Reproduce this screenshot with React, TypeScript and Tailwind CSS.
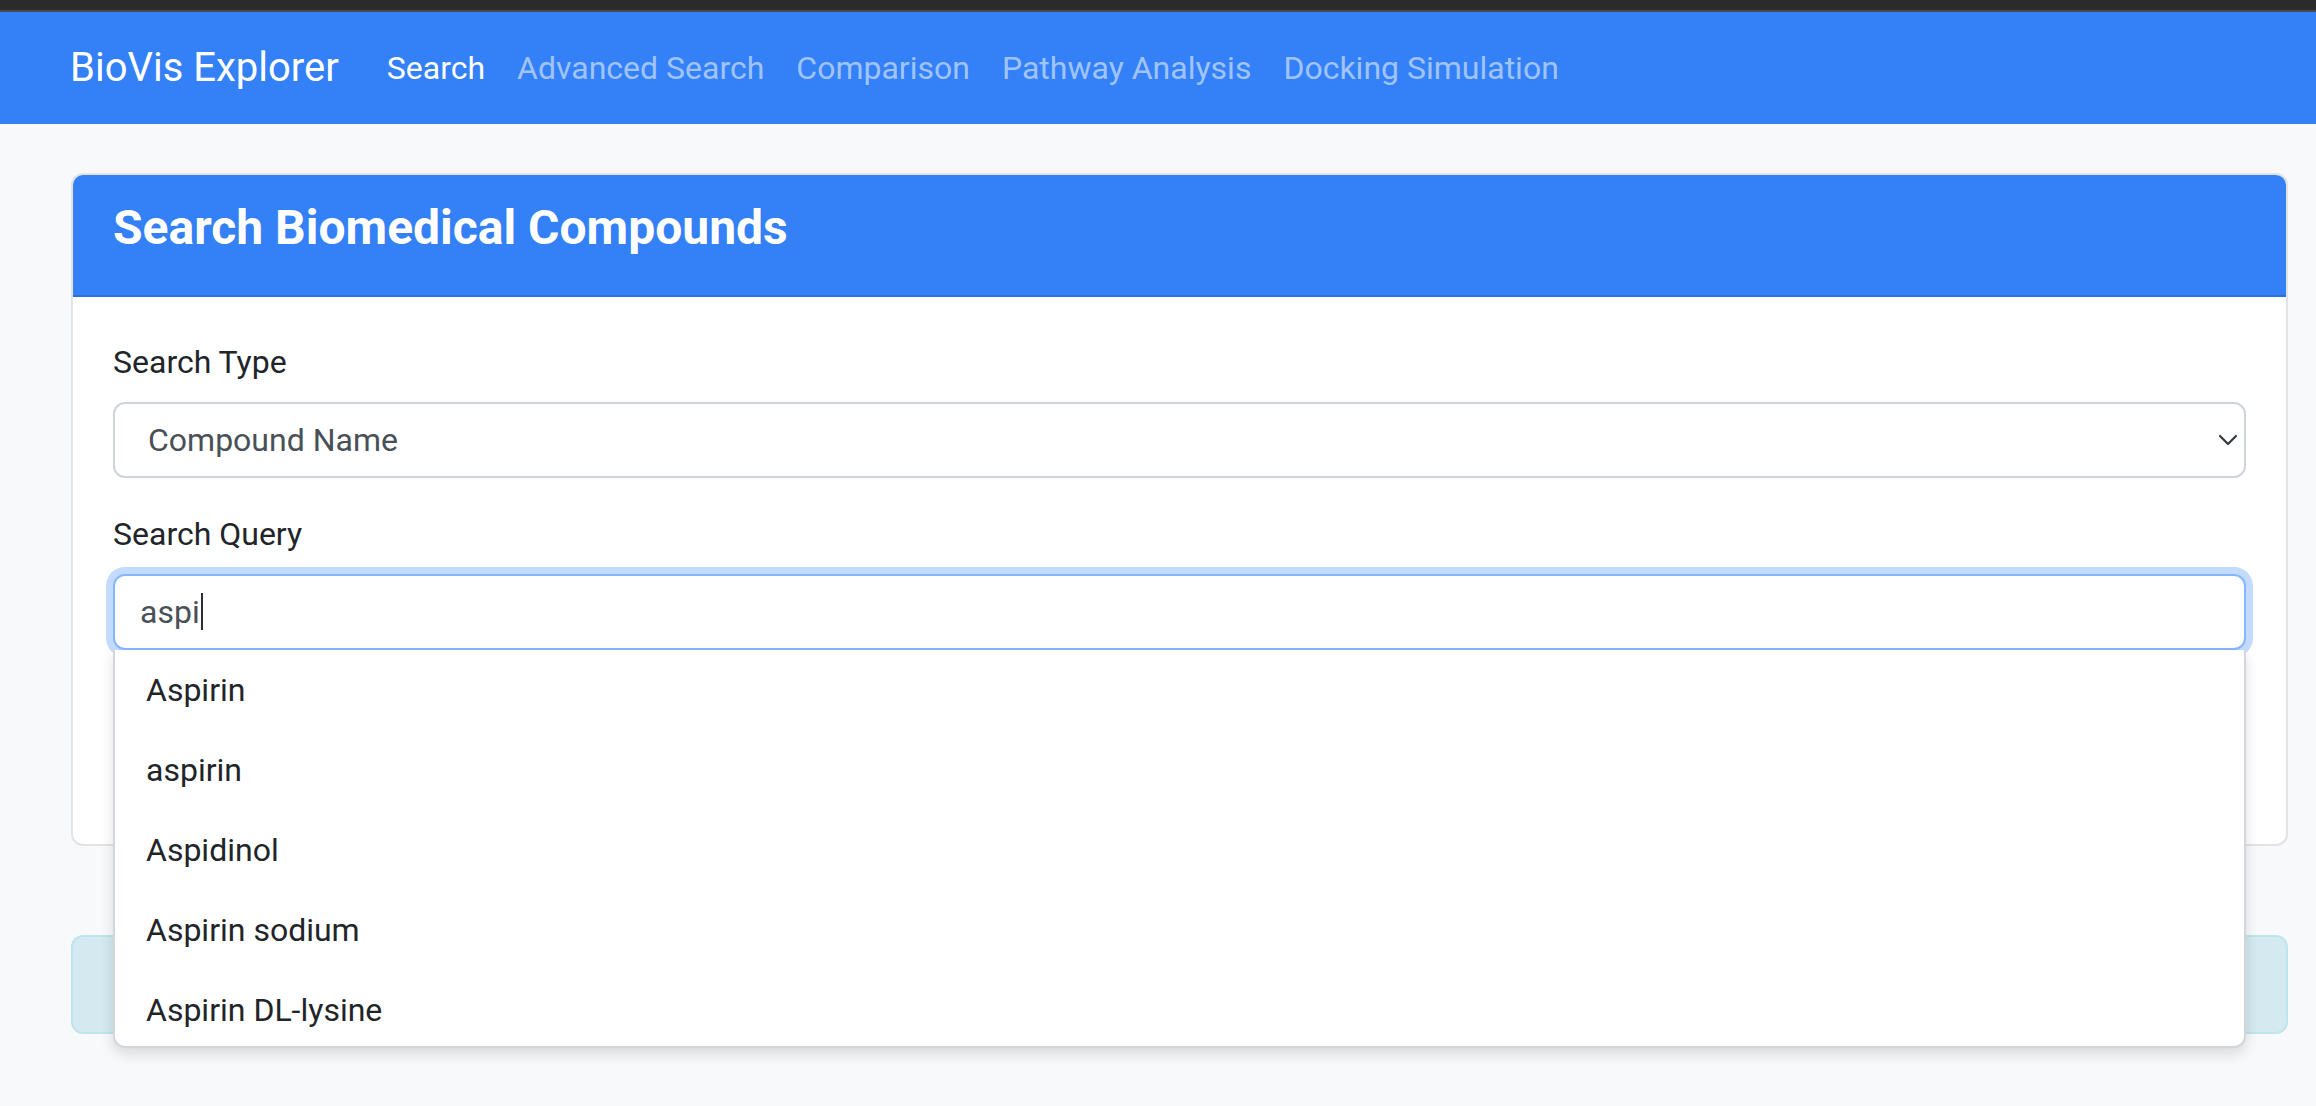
import React from 'react';

const navLinks = ['Search', 'Advanced Search', 'Comparison', 'Pathway Analysis', 'Docking Simulation'];

const suggestions = ['Aspirin', 'aspirin', 'Aspidinol', 'Aspirin sodium', 'Aspirin DL-lysine'];

const App: React.FC = () => {
  return (
    <div className="min-h-screen bg-[#f8f9fa] font-['Roboto',sans-serif] text-[#212529]">
      {/* Window chrome strip */}
      <div className="h-[10px] bg-[#2b2b2b]" />
      <div className="h-[2px] bg-[#4b4b4b]" />

      {/* Navbar */}
      <nav className="flex h-[112px] items-center bg-[#3380f7] pl-[70px]">
        <span className="mr-[32px] text-[40px] leading-[1.5] text-white">BioVis Explorer</span>
        <ul className="flex items-center">
          {navLinks.map((link, i) => (
            <li key={link}>
              <a
                href="#"
                className={`block px-[16px] text-[32px] leading-[1.5] ${
                  i === 0 ? 'text-white' : 'text-[rgba(255,255,255,0.55)]'
                }`}
              >
                {link}
              </a>
            </li>
          ))}
        </ul>
      </nav>

      <main className="ml-[71px] mr-[28px] pt-[49px]">
        {/* Search card */}
        <section className="rounded-[12px] border-2 border-[#e2e3e5] bg-white">
          <div className="rounded-t-[10px] border-b-2 border-[#2d70d8] bg-[#3380f7] px-[40px] pt-[24px] pb-[38px]">
            <h3 className="text-[48px] font-bold leading-[1.2] text-white">Search Biomedical Compounds</h3>
          </div>

          <div className="px-[40px] pt-[41px] pb-[194px]">
            <div className="mb-[32px]">
              <label className="mb-[16px] block text-[32px] leading-[1.5]">Search Type</label>
              <div className="relative">
                <select
                  defaultValue="name"
                  className="h-[76px] w-full appearance-none rounded-[12px] border-2 border-[#ced4da] bg-white pl-[33px] pr-[64px] text-[32px] text-[#495057] outline-none"
                >
                  <option value="name">Compound Name</option>
                  <option value="formula">Molecular Formula</option>
                  <option value="cid">PubChem CID</option>
                </select>
                <svg
                  className="pointer-events-none absolute right-[8px] top-1/2 -translate-y-1/2"
                  width="20"
                  height="14"
                  viewBox="0 0 20 14"
                  fill="none"
                >
                  <path d="M2 3l8 8 8-8" stroke="#343a40" strokeWidth="2.2" strokeLinecap="round" strokeLinejoin="round" />
                </svg>
              </div>
            </div>

            <div>
              <label className="mb-[16px] block text-[32px] leading-[1.5]">Search Query</label>
              <div className="relative">
                <div className="flex h-[76px] items-center rounded-[12px] border-2 border-[#86b7fe] bg-white pl-[25px] text-[32px] text-[#495057] shadow-[0_0_0_7px_rgba(13,110,253,0.25)]">
                  <span>aspi</span>
                  <span className="ml-[1px] h-[37px] w-[2px] bg-[#2b2f33]" />
                </div>

                {/* Autocomplete dropdown */}
                <ul className="absolute left-0 right-0 top-full z-10 h-[398px] overflow-hidden rounded-b-[12px] border-x-2 border-b-2 border-[#d3d6da] bg-white shadow-[0_6px_14px_rgba(0,0,0,0.13)]">
                  {suggestions.map((s) => (
                    <li key={s} className="px-[31px] py-[16px] text-[32px] leading-[1.5] text-[#212529]">
                      {s}
                    </li>
                  ))}
                </ul>
              </div>
            </div>
          </div>
        </section>

        {/* Info alert (covered by the open dropdown) */}
        <div className="mt-[89px] h-[99px] rounded-[12px] border-2 border-[#bee5eb] bg-[#d4eaf0]" />
      </main>
    </div>
  );
};

export default App;
